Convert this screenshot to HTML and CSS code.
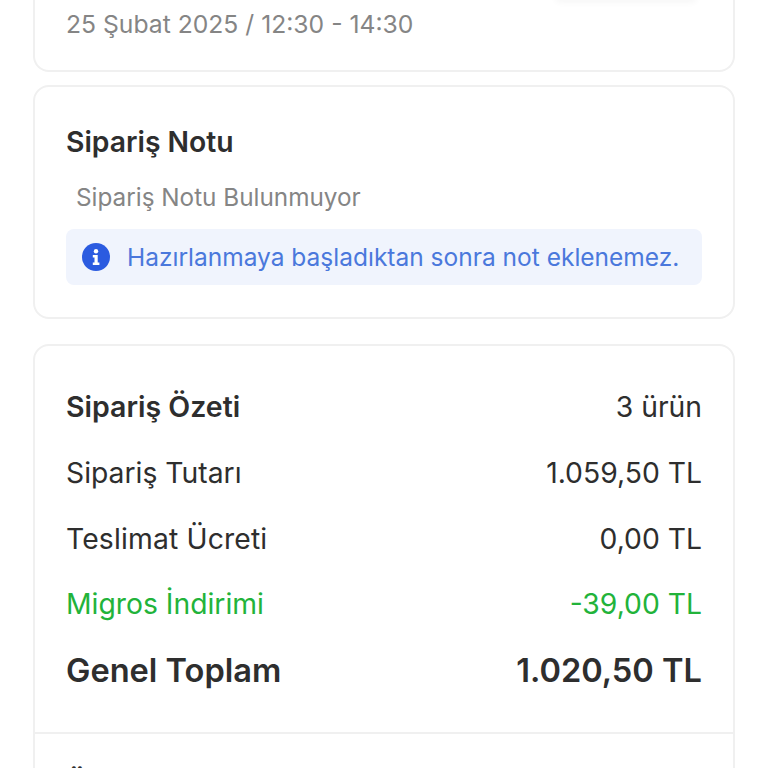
FILE: index.html
```html
<!DOCTYPE html>
<html lang="tr">
<head>
    <meta charset="UTF-8">
    <meta name="viewport" content="width=device-width, initial-scale=1.0">
    <title>Sipariş Detayı</title>
    <link rel="stylesheet" href="styles.css">
</head>
<body>
    <div class="page">
        <div class="card card-top">
            <div class="action-shadow"></div>
            <div class="delivery-date">25 Şubat 2025 / 12:30 - 14:30</div>
        </div>

        <div class="card card-note">
            <h2 class="card-title">Sipariş Notu</h2>
            <div class="note-text">Sipariş Notu Bulunmuyor</div>
            <div class="info-box">
                <svg class="info-icon" viewBox="0 0 28 28" aria-hidden="true">
                    <circle cx="14" cy="14" r="14" fill="#2b5be0"/>
                    <circle cx="14" cy="8.2" r="2.2" fill="#fff"/>
                    <path d="M10.8 12h4.9v7.6h1.7V22h-6.6v-2.4h1.7v-5.2h-1.7z" fill="#fff"/>
                </svg>
                <span>Hazırlanmaya başladıktan sonra not eklenemez.</span>
            </div>
        </div>

        <div class="card card-summary">
            <div class="summary-rows">
                <div class="row row-head"><span>Sipariş Özeti</span><span class="row-count">3 ürün</span></div>
                <div class="row"><span>Sipariş Tutarı</span><span>1.059,50 TL</span></div>
                <div class="row row-fee"><span>Teslimat Ücreti</span><span>0,00 TL</span></div>
                <div class="row row-discount"><span>Migros İndirimi</span><span>-39,00 TL</span></div>
                <div class="row row-total"><span>Genel Toplam</span><span>1.020,50 TL</span></div>
            </div>
            <div class="summary-foot">Ödeme</div>
        </div>
    </div>
</body>
</html>
```

FILE: styles.css
```css
html, body {
    margin: 0;
    padding: 0;
    height: 100%;
    overflow: hidden;
    background-color: #fff;
}
body {
    font-family: Inter, "Noto Sans", sans-serif;
    color: #2e2e2e;
}
.page {
    height: 768px;
    overflow: hidden;
    padding: 0 33px;
    box-sizing: border-box;
}
.card {
    border: 2px solid #f0f0f0;
    border-radius: 16px;
    background-color: #fff;
    box-sizing: border-box;
}
.card-top {
    position: relative;
    height: 72px;
    padding: 9px 31px 0;
    border-top: 0;
    border-radius: 0 0 16px 16px;
}
.action-shadow {
    position: absolute;
    top: -10px;
    right: 36px;
    width: 142px;
    height: 10px;
    border-radius: 8px;
    box-shadow: 0 3px 6px rgba(0, 0, 0, 0.035);
}
.delivery-date {
    font-size: 24.7px;
    line-height: 30px;
    color: #858585;
}
.card-note {
    height: 234px;
    margin-top: 13px;
    padding: 37px 31px 0;
}
.card-title {
    margin: 0;
    font-size: 28.3px;
    line-height: 36px;
    font-weight: 600;
}
.note-text {
    margin-top: 22px;
    padding-left: 10px;
    font-size: 24.3px;
    line-height: 30px;
    color: #858585;
}
.info-box {
    display: flex;
    align-items: center;
    gap: 17px;
    height: 56px;
    margin-top: 17px;
    padding-left: 16px;
    border-radius: 8px;
    background-color: #f0f4fd;
    font-size: 24.5px;
    color: #4a78dc;
}
.info-icon {
    width: 28px;
    height: 28px;
    flex: none;
}
.card-summary {
    height: 500px;
    margin-top: 25px;
}
.summary-rows {
    display: flex;
    flex-direction: column;
    gap: 29.6px;
    padding: 43.4px 31px 44px;
}
.row {
    display: flex;
    justify-content: space-between;
    font-size: 28.3px;
    line-height: 36px;
}
.row-head span:first-child {
    font-weight: 600;
    font-size: 28.5px;
}
.row-fee span:first-child {
    letter-spacing: 0.15px;
}
.row-discount {
    color: #22b33a;
}
.row-total {
    font-size: 32.6px;
    font-weight: 600;
}
.summary-foot {
    border-top: 2px solid #f0f0f0;
    padding: 31px 31px 0;
    font-size: 28.3px;
    line-height: 36px;
    font-weight: 600;
}
```
